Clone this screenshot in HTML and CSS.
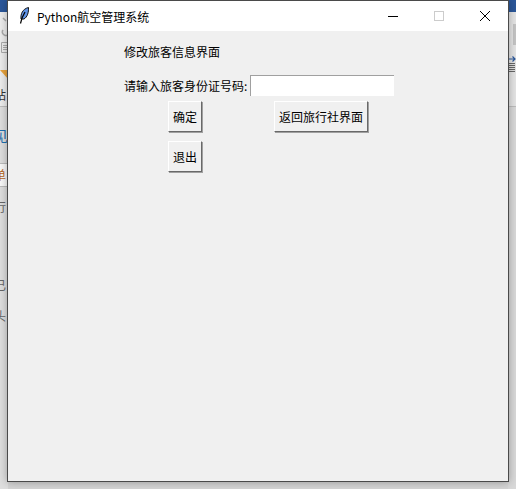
FILE: index.html
```html
<!DOCTYPE html>
<html lang="zh-CN">
<head>
    <meta charset="UTF-8">
    <title>Python航空管理系统</title>
    <link rel="stylesheet" href="styles.css">
</head>
<body>
    <div class="desktop">
        <div class="behind-left">
            <div class="topbar"></div>
            <svg class="toolbar-icons" width="8" height="70" viewBox="0 0 8 70">
                <path d="M3 6 L6 9 M3 18 A3.5 3.5 0 1 0 8 17" stroke="#aaa" stroke-width="1.5" fill="none"/>
                <path d="M8 30.5 H1.5 V40.5 H8 M3 33.5 H8 M3 35.5 H8 M3 37.5 H8" stroke="#aaa" fill="none"/>
                <path d="M0 58 H8 V67 Z" fill="#e8a33d"/>
            </svg>
            <div class="frag frag-zhan">站</div>
            <div class="frag frag-blue">见</div>
            <div class="frag-input">单</div>
            <div class="frag frag-xing">行</div>
            <div class="frag frag-yi">已</div>
            <div class="frag frag-tou">头</div>
        </div>
        <div class="behind-right">
            <div class="topbar"></div>
            <div class="thumb"></div>
            <svg class="arrow" width="7" height="6" viewBox="0 0 7 6"><path d="M0 3 H6 M3.5 0.5 L6 3 L3.5 5.5" stroke="#2b579a" stroke-width="1.2" fill="none"/></svg>
            <div class="lines"></div>
        </div>

        <div class="window">
            <div class="titlebar">
                <svg class="feather" width="10" height="17" viewBox="0 0 10 17">
                    <path d="M2 12 C1.5 7 3.5 2 9.5 0.5 C9.8 5 8.5 10 5 12 Z" fill="#5f93e6" stroke="#111" stroke-width="1"/>
                    <path d="M1.5 16.5 L3 11 L6 5" stroke="#000" stroke-width="1.2" fill="none"/>
                </svg>
                <span class="title">Python航空管理系统</span>
                <div class="controls">
                    <svg class="control" width="46" height="31" viewBox="0 0 46 31"><path d="M18 15.5 H28" stroke="#000" fill="none"/></svg>
                    <svg class="control" width="46" height="31" viewBox="0 0 46 31"><rect x="18.5" y="10.5" width="9" height="9" stroke="#ccc" fill="none"/></svg>
                    <svg class="control" width="46" height="31" viewBox="0 0 46 31"><path d="M18 10 L28 20 M28 10 L18 20" stroke="#000" fill="none"/></svg>
                </div>
            </div>
            <div class="content">
                <div class="label heading">修改旅客信息界面</div>
                <div class="id-row">
                    <label class="label">请输入旅客身份证号码:</label>
                    <input class="entry" type="text">
                </div>
                <div class="button-row">
                    <button class="btn">确定</button>
                    <button class="btn wide">返回旅行社界面</button>
                </div>
                <div class="button-row second">
                    <button class="btn">退出</button>
                </div>
            </div>
        </div>
    </div>
</body>
</html>
```

FILE: styles.css
```css
html, body {
    margin: 0;
    padding: 0;
}

body {
    font-family: "Noto Sans CJK SC", "Liberation Sans", sans-serif;
    font-size: 12px;
    color: #000;
}

.desktop {
    position: relative;
    width: 516px;
    height: 489px;
    overflow: hidden;
    background: #d4d4d4;
}

/* the other app showing around the window */
.behind-left {
    position: absolute;
    left: 0;
    top: 0;
    width: 8px;
    height: 489px;
    background: linear-gradient(#ececec 0 106px, #bdbdbd 106px 107px, #dedede 107px);
    color: #333;
}

.behind-right {
    position: absolute;
    right: 0;
    top: 0;
    width: 8px;
    height: 489px;
    background: linear-gradient(#e4e4e4 0 106px, #bdbdbd 106px 107px, #d8d8d8 107px);
}

.topbar {
    height: 12px;
    background: #2b579a;
}

.toolbar-icons {
    position: absolute;
    left: 0;
    top: 12px;
}

.thumb {
    position: absolute;
    right: 0;
    top: 24px;
    width: 3px;
    height: 21px;
    background: #c4c4c4;
}

.arrow {
    position: absolute;
    left: 1px;
    top: 56px;
}

.lines {
    position: absolute;
    left: 1px;
    top: 63px;
    width: 6px;
    height: 9px;
    background: repeating-linear-gradient(#666 0 1px, #ddd 1px 2px);
}

.frag {
    position: absolute;
    left: -6px;
    width: 14px;
    line-height: 14px;
    font-size: 12px;
}

.frag-zhan { top: 88px; }
.frag-blue { top: 128px; font-size: 14px; color: #1c6fb0; }
.frag-xing { top: 200px; color: #666; }
.frag-yi { top: 278px; color: #666; }
.frag-tou { top: 309px; color: #666; }

.frag-input {
    position: absolute;
    left: 0;
    top: 163px;
    width: 8px;
    height: 22px;
    overflow: hidden;
    background: #f8f8f8;
    border-top: 1px solid #bbb;
    border-bottom: 1px solid #bbb;
    line-height: 22px;
    text-indent: -6px;
    color: #b5651d;
}

.window {
    position: absolute;
    left: 7px;
    top: 0;
    width: 500px;
    height: 480px;
    background: #f0f0f0;
    border: 1px solid #4a4a4a;
    box-shadow: 0 0 8px rgba(0, 0, 0, 0.3);
}

.titlebar {
    display: flex;
    align-items: center;
    height: 30px;
    background: #fff;
}

.feather {
    margin-left: 11px;
    margin-top: -1px;
}

.title {
    margin-left: 8px;
    font-size: 12px;
}

.controls {
    display: flex;
    margin-left: auto;
}

.content {
    padding: 11px 0 0 116px;
}

.label {
    line-height: 20px;
    white-space: nowrap;
}

.id-row {
    display: flex;
    align-items: center;
    margin-top: 13px;
}

.entry {
    box-sizing: border-box;
    width: 144px;
    height: 21px;
    margin: 0 0 0 3px;
    padding: 0 2px;
    background: #fff;
    border: none;
    border-top: 1px solid #a0a0a0;
    border-left: 1px solid #a0a0a0;
    outline: none;
}

.button-row {
    display: flex;
    gap: 72px;
    margin-top: 5px;
    margin-left: 44px;
}

.button-row.second {
    margin-top: 9px;
}

.btn {
    box-sizing: border-box;
    width: 34px;
    height: 31px;
    padding: 0;
    font-family: inherit;
    font-size: 12px;
    color: #000;
    background: #f0f0f0;
    border: 1px solid;
    border-color: #fff #696969 #696969 #fff;
    box-shadow: 1px 1px 0 #a0a0a0;
}

.btn.wide {
    width: 94px;
}
```
